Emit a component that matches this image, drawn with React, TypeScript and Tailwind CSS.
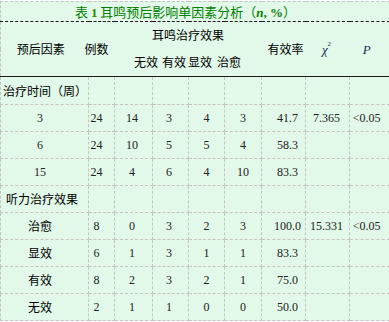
import React from "react";

const CJK = "font-['Liberation_Serif','Noto_Sans_CJK_SC',serif]";
const SANS = "font-['Noto_Sans_CJK_SC','Noto_Sans',sans-serif]";

type Row = [string, string, string, string, string, string, string, string, string];

const group1: Row[] = [
  ["3", "24", "14", "3", "4", "3", "41.7", "7.365", "<0.05"],
  ["6", "24", "10", "5", "5", "4", "58.3", "", ""],
  ["15", "24", "4", "6", "4", "10", "83.3", "", ""],
];
const group2: Row[] = [
  ["治愈", "8", "0", "3", "2", "3", "100.0", "15.331", "<0.05"],
  ["显效", "6", "1", "3", "1", "1", "83.3", "", ""],
  ["有效", "8", "2", "3", "2", "1", "75.0", "", ""],
  ["无效", "2", "1", "1", "0", "0", "50.0", "", ""],
];

const cellPad = [
  "pr-[9px]",
  "pr-[10px]",
  "pr-[3px]",
  "pr-[3px]",
  "",
  "",
  "pl-[8px]",
  "pr-[2px]",
  "pr-[6px]",
];

const dash = "border border-dashed border-[#c4c4c4]";

function DataRow({ r }: { r: Row }) {
  return (
    <tr className="h-[27px]">
      {r.map((c, i) => (
        <td
          key={i}
          className={`${dash} text-center align-middle whitespace-nowrap ${cellPad[i]} ${
            i === 0 && /[^\d]/.test(c) ? SANS + " text-black" : "text-[#222]"
          }`}
        >
          {c}
        </td>
      ))}
    </tr>
  );
}

function SectionRow({ label, pad }: { label: string; pad: string }) {
  return (
    <tr className="h-[27px]">
      <td className={`${dash} ${SANS} text-black whitespace-nowrap text-left ${pad}`}>{label}</td>
      {Array.from({ length: 8 }).map((_, i) => (
        <td key={i} className={dash}></td>
      ))}
    </tr>
  );
}

export default function App() {
  return (
    <div className="w-[389px] h-[322px] bg-white overflow-hidden pt-px">
      <table
        className={`w-[389px] table-fixed border-collapse bg-[#e2f8e8] text-[12px] leading-none ${CJK}`}
      >
        <colgroup>
          <col className="w-[88px]" />
          <col className="w-[26px]" />
          <col className="w-[38px]" />
          <col className="w-[36px]" />
          <col className="w-[36px]" />
          <col className="w-[37px]" />
          <col className="w-[44px]" />
          <col className="w-[44px]" />
          <col className="w-[40px]" />
        </colgroup>
        <tbody>
          <tr className="h-[20px]">
            <td
              colSpan={9}
              className="border-t border-l border-r border-dashed border-[#c4c4c4] border-b border-b-[#1a1a1a] border-b-solid text-center align-middle pr-[19px] text-[13px] text-[#008000] whitespace-nowrap"
            >
              <span className={SANS}>表 </span>
              <span className="font-['Liberation_Serif',serif] font-bold text-[#2e8b00]">1</span>
              <span className={SANS}> 耳鸣预后影响单因素分析（</span>
              <span className="font-['Liberation_Serif',serif] font-bold italic">n</span>
              <span className="font-['Liberation_Serif',serif] font-bold">, %</span>
              <span className={SANS}>）</span>
            </td>
          </tr>
          <tr className="h-[27px]">
            <td rowSpan={2} className={`${SANS} text-black text-center align-middle pr-[8px] border-l border-dashed border-[#c4c4c4] whitespace-nowrap`}>
              预后因素
            </td>
            <td rowSpan={2} className={`${SANS} text-black align-middle whitespace-nowrap`}>
              <div className="-ml-[16px] w-[48px] text-center">例数</div>
            </td>
            <td colSpan={4} className={`${SANS} text-black text-center align-middle whitespace-nowrap`}>
              耳鸣治疗效果
            </td>
            <td rowSpan={2} className={`${SANS} text-black text-center align-middle pl-[4px] whitespace-nowrap`}>
              有效率
            </td>
            <td rowSpan={2} className="text-center align-middle pr-[2px] text-[#1f2a5a]">
              <span className="italic font-['Liberation_Serif',serif] text-[13px]">χ</span>
              <sup className="text-[7px] align-top relative top-[1px]">2</sup>
            </td>
            <td rowSpan={2} className="text-center align-middle pr-[5px] text-[#1f2a5a] border-r border-dashed border-[#c4c4c4]">
              <span className="italic font-['Liberation_Serif',serif] text-[13px]">P</span>
            </td>
          </tr>
          <tr className="h-[28px]">
            <td colSpan={4} className={`${SANS} text-black text-center align-middle whitespace-nowrap pr-px`}>
              <span>无效</span>
              <span className="ml-[4px]">有效</span>
              <span className="ml-[2px]">显效</span>
              <span className="ml-[5px]">治愈</span>
            </td>
          </tr>
          <tr className="h-[28px] border-t border-solid border-t-[#1a1a1a]">
            <td className={`${dash} border-t-solid border-t-[#1a1a1a] ${SANS} text-black whitespace-nowrap text-left pl-[2px]`}>
              治疗时间（周）
            </td>
            {Array.from({ length: 8 }).map((_, i) => (
              <td key={i} className={`${dash} border-t-solid border-t-[#1a1a1a]`}></td>
            ))}
          </tr>
          {group1.map((r, i) => (
            <DataRow key={"a" + i} r={r} />
          ))}
          <SectionRow label="听力治疗效果" pad="pl-[5px]" />
          {group2.map((r, i) => (
            <DataRow key={"b" + i} r={r} />
          ))}
        </tbody>
      </table>
    </div>
  );
}
